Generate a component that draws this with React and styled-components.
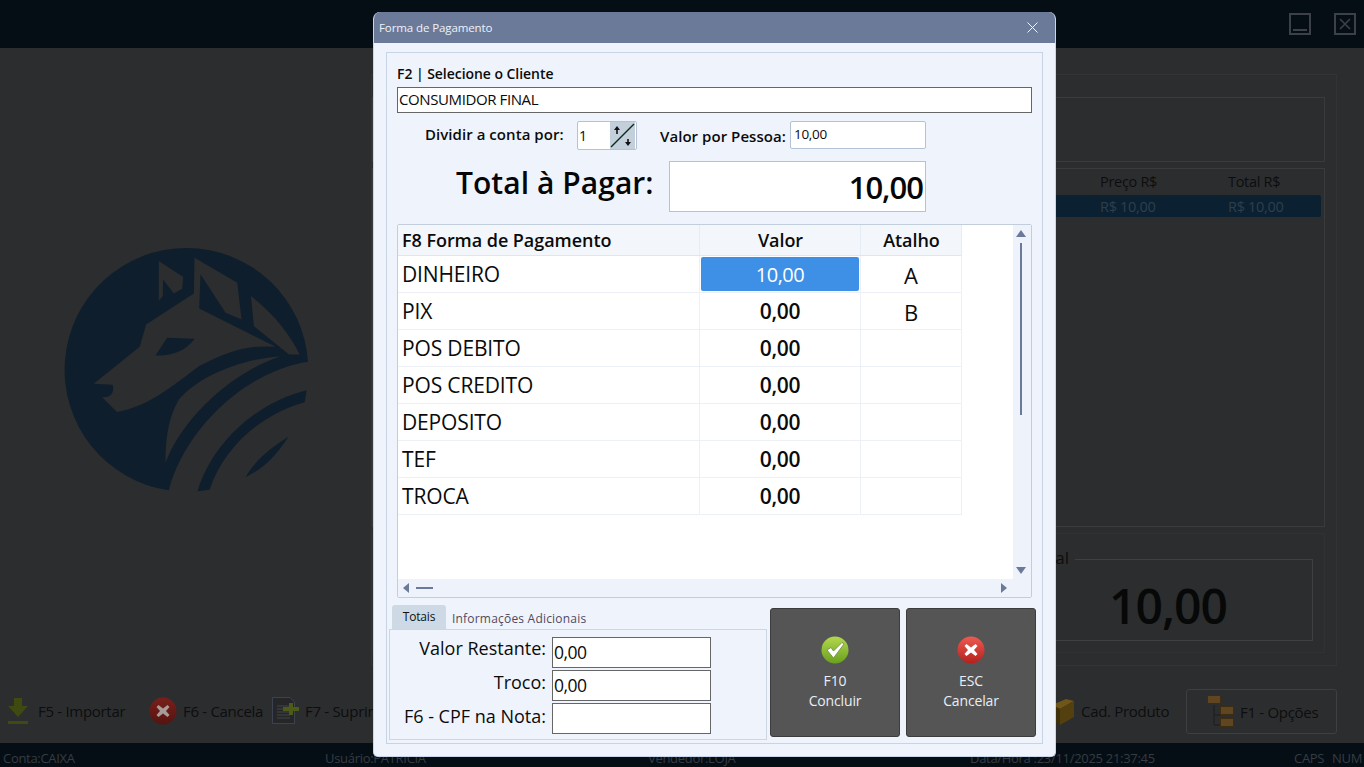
import React from 'react';
import styled, { createGlobalStyle } from 'styled-components';

const GlobalStyle = createGlobalStyle`
  html, body { margin: 0; padding: 0; background: #2c2d2e; overflow: hidden; }
  * { box-sizing: border-box; }
  body { font-family: "Open Sans", "Noto Sans", sans-serif; }
`

const Page = styled.div`
  position: relative;
  width: 1364px;
  height: 767px;
  display: grid;
  grid-template-rows: 48px 622px 73px 24px;
  background: #2c2d2e;
  overflow: hidden;
`

const TopBar = styled.div`
  background: #060e15;
  display: flex;
  justify-content: flex-end;
  align-items: flex-start;
  gap: 23px;
  padding: 13px 8px 0 0;
`

const WinButton = styled.div`
  width: 22px;
  height: 22px;
  border: 2px solid #3b4146;
  display: flex;
  align-items: center;
  justify-content: center;
`

const Main = styled.div`
  display: grid;
  grid-template-columns: 371px 966px;
`

const LogoSide = styled.div`
  padding: 198px 0 0 62px;
`

const SalePanel = styled.div`
  margin-top: 26px;
  height: 592px;
  border: 1px solid #323335;
  padding: 22px 11px 0 0;
  display: flex;
  flex-direction: column;
`

const TopGroup = styled.div`
  height: 65px;
  border: 1px solid #3a3b3d;
`

const ItemsGrid = styled.div`
  margin-top: 6px;
  height: 359px;
  border: 1px solid #3a3b3d;
  padding: 1px 3px;
  color: #0c0d0e;
  font-size: 14.5px;
  letter-spacing: -0.3px;
`

const ItemsRow = styled.div`
  display: grid;
  grid-template-columns: 630px 82px 128px 1fr;
  align-items: center;
  height: 25px;
  padding: 0 0 2px 12px;
`

const ItemsSelected = styled(ItemsRow)`
  height: 22px;
  padding-bottom: 0;
  background: #0b2132;
  border-radius: 2px;
  color: #2e3f4c;
`

const TotalGroup = styled.div`
  margin-top: 6px;
  height: 120px;
  border: 1px solid #303133;
  padding: 25px 11px 0 0;
`

const TotalFieldset = styled.div`
  position: relative;
  height: 82px;
  border: 1px solid #3f4042;
  color: #070808;
  font-size: 48px;
  font-weight: 600;
  letter-spacing: -1px;
  line-height: 92px;
  text-align: center;
  padding-left: 650px;
`

const TotalLegend = styled.span`
  position: absolute;
  top: -14px;
  right: 237px;
  padding: 0 6px;
  background: #2c2d2e;
  color: #0c0d0e;
  font-size: 17px;
  font-weight: 400;
  letter-spacing: 0;
  line-height: 24px;
`

const Toolbar = styled.div`
  display: flex;
  align-items: center;
  padding: 9px 27px 0 8px;
  color: #0d0e0f;
  font-size: 15px;
  letter-spacing: -0.3px;
`

const ToolItem = styled.div`
  width: ${p => p.$width}px;
  display: flex;
  align-items: center;
  gap: ${p => p.$gap || 6}px;
  white-space: nowrap;
  flex-shrink: 0;
  svg { flex-shrink: 0; }
`

const ToolSpacer = styled.div`
  flex: 1;
`

const OptionsButton = styled.div`
  width: 151px;
  height: 45px;
  margin-top: 1px;
  border: 1px solid #3e3f41;
  border-radius: 3px;
  display: flex;
  align-items: center;
  gap: 5px;
  padding-left: 20px;
`

const StatusBar = styled.div`
  background: #060e15;
  display: grid;
  grid-template-columns: 322px 323px 322px 324px 38px 1fr;
  align-items: center;
  padding: 6px 0 0 3px;
  color: #353c42;
  font-size: 13px;
  letter-spacing: -0.3px;
  white-space: nowrap;
`

const Modal = styled.div`
  position: absolute;
  left: 373px;
  top: 12px;
  width: 683px;
  height: 745px;
  background: #eff4fc;
  border-radius: 7px 7px 5px 5px;
  border: 1px solid #c9d5ea;
  border-top: none;
  display: flex;
  flex-direction: column;
  overflow: hidden;
`

const TitleBar = styled.div`
  height: 31px;
  flex-shrink: 0;
  background: #6b7a98;
  display: flex;
  align-items: center;
  justify-content: space-between;
  padding: 0 17px 0 5px;
  color: #eef2f8;
  font-size: 11.5px;
  letter-spacing: -0.1px;
`

const Inner = styled.div`
  margin: 9px 12px 0 12px;
  height: 692px;
  border: 1px solid #c8d4e3;
  padding: 12px 10px 0;
  display: flex;
  flex-direction: column;
`

const ClientLabel = styled.div`
  height: 22px;
  font-size: 14px;
  font-weight: 600;
  letter-spacing: -0.05px;
  line-height: 18px;
  color: #0b0b0b;
`

const ClientField = styled.div`
  height: 26px;
  background: #fff;
  border: 1px solid #666;
  padding-left: 1px;
  font-size: 15px;
  letter-spacing: -0.4px;
  line-height: 22px;
  color: #0a0a0a;
`

const SplitRow = styled.div`
  margin-top: 8px;
  height: 29px;
  display: flex;
  padding-left: 28px;
  color: #0b0b0b;
  font-size: 15px;
  font-weight: 600;
`

const SplitLabel = styled.div`
  width: ${p => p.$width}px;
  padding-left: ${p => p.$indent || 0}px;
  line-height: ${p => p.$line || 26}px;
  letter-spacing: 0.05px;
  white-space: nowrap;
`

const SpinBox = styled.div`
  width: 60px;
  height: 29px;
  background: #fff;
  border: 1px solid #b4c2d6;
  border-radius: 2px;
  display: flex;
  justify-content: space-between;
  padding-left: 1px;
  font-weight: 400;
  font-size: 14px;
  line-height: 27px;
`

const SpinButton = styled.div`
  width: 25px;
  height: 27px;
  background: #c3d0dc;
  margin-right: 1px;
`

const PersonField = styled.div`
  width: 136px;
  height: 28px;
  background: #fff;
  border: 1px solid #b4c2d6;
  border-radius: 2px;
  padding-left: 3px;
  font-size: 13.5px;
  font-weight: 400;
  letter-spacing: -0.3px;
  line-height: 24px;
`

const TotalRow = styled.div`
  margin-top: 11px;
  height: 51px;
  display: flex;
  padding-left: 59px;
  gap: 15px;
`

const TotalLabel = styled.div`
  width: 198px;
  font-size: 30px;
  font-weight: 600;
  letter-spacing: 0.05px;
  line-height: 44px;
  color: #060606;
  white-space: nowrap;
`

const TotalField = styled.div`
  width: 257px;
  background: #fff;
  border: 1px solid #b4c2d6;
  text-align: right;
  padding-right: 2px;
  font-size: 31px;
  font-weight: 600;
  letter-spacing: -1px;
  line-height: 50px;
  color: #060606;
`

const TableBox = styled.div`
  margin-top: 12px;
  height: 374px;
  border: 1px solid #c3cedd;
  border-radius: 2px;
  background: #fff;
  display: grid;
  grid-template-columns: 1fr 18px;
  grid-template-rows: 1fr 18px;
`

const TableArea = styled.div`
  display: grid;
  grid-template-columns: 302px 161px 101px;
  grid-auto-rows: 37px;
  grid-template-rows: 31px;
  color: #0b0b0b;
`

const HeadCell = styled.div`
  background: #f3f7fc;
  border-right: 1px solid #e6ecf4;
  border-bottom: 1px solid #dfe6ef;
  font-size: 18px;
  font-weight: 600;
  letter-spacing: -0.05px;
  line-height: 30px;
  text-align: ${p => (p.$center ? 'center' : 'left')};
  padding-left: ${p => (p.$center ? 1 : 4)}px;
  white-space: nowrap;
`

const NameCell = styled.div`
  border-right: 1px solid #edf1f7;
  border-bottom: 1px solid #edf1f7;
  padding-left: 4px;
  font-size: 21px;
  letter-spacing: -0.15px;
  line-height: 37px;
`

const ValueCell = styled.div`
  border-right: 1px solid #edf1f7;
  border-bottom: 1px solid #edf1f7;
  padding: 1px;
`

const ValueInner = styled.div`
  height: 34px;
  border-radius: 2px;
  background: ${p => (p.$selected ? '#3e8fe6' : 'transparent')};
  color: ${p => (p.$selected ? '#fff' : '#0b0b0b')};
  font-size: ${p => (p.$selected ? 20 : 21)}px;
  font-weight: ${p => (p.$selected ? 400 : 600)};
  letter-spacing: ${p => (p.$selected ? '-0.5px' : '-0.3px')};
  line-height: 35px;
  text-align: center;
`

const KeyCell = styled.div`
  border-right: 1px solid #edf1f7;
  border-bottom: 1px solid #edf1f7;
  font-size: 22px;
  line-height: 38px;
  text-align: center;
`

const VScroll = styled.div`
  background: #eef3fb;
  display: flex;
  flex-direction: column;
  align-items: center;
  padding: 5px 2px 0 0;
`

const VThumb = styled.div`
  width: 2px;
  height: 172px;
  margin-top: 6px;
  background: #6b7a98;
`

const ScrollSpacer = styled.div`
  flex: 1;
`

const HScroll = styled.div`
  background: #eef3fb;
  display: flex;
  align-items: center;
  padding: 0 6px 0 5px;
  gap: 7px;
`

const HThumb = styled.div`
  width: 17px;
  height: 2px;
  background: #6b7a98;
`

const Corner = styled.div`
  background: #eef3fb;
`

const ArrowUp = styled.div`
  width: 0;
  height: 0;
  border-left: 5px solid transparent;
  border-right: 5px solid transparent;
  border-bottom: 7px solid #6b7a98;
`

const ArrowDown = styled(ArrowUp)`
  border-bottom: none;
  border-top: 7px solid #6b7a98;
  margin-bottom: 5px;
`

const ArrowSide = styled.div`
  width: 0;
  height: 0;
  border-top: 5px solid transparent;
  border-bottom: 5px solid transparent;
  ${p => (p.$left ? 'border-right: 6px solid #6b7a98;' : 'border-left: 6px solid #6b7a98;')}
`

const BottomRow = styled.div`
  margin: 7px -4px 0 -8px;
  display: flex;
  gap: 3px;
`

const TabsColumn = styled.div`
  width: 378px;
`

const TabStrip = styled.div`
  height: 24px;
  display: flex;
  padding-left: 3px;
`

const Tab = styled.div`
  width: ${p => (p.$active ? '54px' : 'auto')};
  background: ${p => (p.$active ? '#cdd9e5' : 'transparent')};
  border-radius: 3px 3px 0 0;
  padding-left: ${p => (p.$active ? 0 : 6)}px;
  text-align: ${p => (p.$active ? 'center' : 'left')};
  color: ${p => (p.$active ? '#111' : '#4f4a5e')};
  font-size: 12px;
  letter-spacing: ${p => (p.$active ? '-0.2px' : '0.2px')};
  line-height: ${p => (p.$active ? 24 : 27)}px;
`

const TabPanel = styled.div`
  height: 111px;
  border: 1px solid #cdd6e3;
  padding-top: 7px;
  display: flex;
  flex-direction: column;
  gap: 2px;
`

const TotalsRow = styled.div`
  display: flex;
  gap: 6px;
`

const TotalsLabel = styled.div`
  width: 156px;
  padding-top: ${p => p.$drop || 0}px;
  text-align: right;
  color: #0b0b0b;
  font-size: 18px;
  letter-spacing: 0;
  line-height: 23px;
  white-space: nowrap;
`

const TotalsField = styled.div`
  width: 159px;
  height: 31px;
  background: #fff;
  border: 1px solid #666;
  padding-left: 1px;
  color: #0a0a0a;
  font-size: 17.5px;
  letter-spacing: -0.5px;
  line-height: 28px;
`

const ActionButton = styled.div`
  width: 130px;
  height: 129px;
  margin: 3px ${p => p.$gap || 0}px 0 0;
  background: #555;
  border: 1px solid #3c3c3c;
  border-radius: 3px;
  display: flex;
  flex-direction: column;
  align-items: center;
  padding-top: 27px;
  color: #e9eef6;
  font-size: 14px;
  letter-spacing: -0.15px;
  line-height: 20px;
`

const ActionIcon = styled.div`
  height: 34px;
  margin-bottom: 1px;
`

function WolfLogo() {
  const bg = '#2c2d2e'
  return (
    <svg width="247" height="247" viewBox="70 50 740 740">
      <path fill="#0f1e2c" d="M807 397A365 365 0 1 0 390 782C430 620 600 430 807 397Z" />
      <path fill={bg} d="M165 463L303 352L322 285L465 192L467 85L595 160L608 270L560 250L485 135L481 237L710 352C620 345 560 370 480 410C400 470 330 530 235 547L190 503C215 505 228 490 222 466Z" />
      <path fill="#0f1e2c" d="M385 325L468 328C440 365 400 380 350 378Z" />
      <path fill={bg} d="M360 95L433 143L430 178L405 192L373 150L372 200L360 215Z" />
      <path fill={bg} d="M636 200C700 250 750 310 782 375L750 375L645 290Z" />
      <path fill={bg} d="M725 380C600 390 480 440 420 510C385 570 380 640 380 700C420 590 550 440 725 380Z" />
      <path fill="#0f1e2c" d="M803 482L797 518C680 550 560 640 512 780L476 785C520 640 650 520 803 482Z" />
      <path fill="#0f1e2c" d="M748 622C710 680 670 720 620 742C650 690 700 650 748 622Z" />
    </svg>
  )
}

function RoundIcon({ size, kind, dim }) {
  const id = `${kind}${dim ? 'Dim' : ''}`
  const stops = kind === 'ok'
    ? ['#b4d84e', '#69a01e']
    : dim ? ['#7a1f1b', '#551410'] : ['#ee5a50', '#b4201c']
  return (
    <svg width={size} height={size} viewBox="0 0 28 28">
      <defs>
        <linearGradient id={id} x1="0" y1="0" x2="0" y2="1">
          <stop offset="0" stopColor={stops[0]} />
          <stop offset="1" stopColor={stops[1]} />
        </linearGradient>
      </defs>
      <circle cx="14" cy="14" r="13.5" fill={`url(#${id})`} />
      {kind === 'ok'
        ? <path d="M6 14L10 11.5L12.5 15L21 6.5L23 8L12.5 22Z" fill="#fff" stroke="#6c8a3a" strokeWidth="0.8" />
        : <path d="M9.5 8L14 11.5L18.5 8L20.5 10L17 14L20.5 18L18.5 20L14 16.5L9.5 20L7.5 18L11 14L7.5 10Z" fill={dim ? '#a89a98' : '#fff'} />}
    </svg>
  )
}

function ImportIcon() {
  return (
    <svg width="20" height="27" viewBox="0 0 20 27">
      <path d="M6 0H14V8H20L10 19L0 8H6Z" fill="#3f4a10" />
      <rect y="23" width="20" height="3" fill="#3f4a10" />
    </svg>
  )
}

function SupplyIcon() {
  return (
    <svg width="28" height="28" viewBox="0 0 28 28">
      <path d="M.5.5H18L22.5 5V26.5H.5Z" fill="#242628" stroke="#3c4350" />
      <path d="M5 9H18M5 12H18M5 15H18M5 18H18M5 21H18" stroke="#454545" />
      <path d="M17 6H21V10H27V14H21V18H17V14H11V10H17Z" fill="#4e5a18" />
    </svg>
  )
}

function BoxIcon() {
  return (
    <svg width="22" height="30" viewBox="0 0 22 30">
      <path d="M0 9L14 3L22 5L8 13Z" fill="#6f5518" />
      <path d="M0 9L8 13V29L0 24Z" fill="#3f300c" />
      <path d="M8 13L22 5V21L8 29Z" fill="#54400f" />
    </svg>
  )
}

function TreeIcon() {
  return (
    <svg width="28" height="33" viewBox="0 0 28 33">
      <path d="M7 10V30H14M7 20H14" stroke="#1c1c1c" fill="none" />
      <rect x=".5" y=".5" width="13" height="8" fill="#5f4620" stroke="#3c2c10" />
      <rect x="13.5" y="11.5" width="13" height="8" fill="#5f4620" stroke="#3c2c10" />
      <rect x="13.5" y="23.5" width="13" height="8" fill="#5f4620" stroke="#3c2c10" />
    </svg>
  )
}

const methods = [
  { name: 'DINHEIRO', value: '10,00', key: 'A', selected: true },
  { name: 'PIX', value: '0,00', key: 'B' },
  { name: 'POS DEBITO', value: '0,00' },
  { name: 'POS CREDITO', value: '0,00' },
  { name: 'DEPOSITO', value: '0,00' },
  { name: 'TEF', value: '0,00' },
  { name: 'TROCA', value: '0,00' },
]

function App() {
  return (
    <Page>
      <GlobalStyle />
      <TopBar>
        <WinButton>
          <svg width="18" height="18" viewBox="0 0 18 18"><rect x="2" y="14" width="14" height="2" fill="#3b4146" /></svg>
        </WinButton>
        <WinButton>
          <svg width="14" height="14" viewBox="0 0 14 14"><path d="M2 2L12 12M12 2L2 12" stroke="#3b4146" strokeWidth="1.6" /></svg>
        </WinButton>
      </TopBar>

      <Main>
        <LogoSide><WolfLogo /></LogoSide>
        <SalePanel>
          <TopGroup />
          <ItemsGrid>
            <ItemsRow>
              <span>Qtd.</span><span />
              <span>Preço R$</span><span>Total R$</span>
            </ItemsRow>
            <ItemsSelected>
              <span>1,000</span><span />
              <span>R$ 10,00</span><span>R$ 10,00</span>
            </ItemsSelected>
          </ItemsGrid>
          <TotalGroup>
            <TotalFieldset>
              <TotalLegend>Total</TotalLegend>
              10,00
            </TotalFieldset>
          </TotalGroup>
        </SalePanel>
      </Main>

      <Toolbar>
        <ToolItem $width={141} $gap={10}><ImportIcon />F5 - Importar</ToolItem>
        <ToolItem $width={123}><RoundIcon size={28} kind="no" dim />F6 - Cancela</ToolItem>
        <ToolItem $width={110} $gap={5}><SupplyIcon />F7 - Suprimento</ToolItem>
        <ToolSpacer />
        <ToolItem $width={134} $gap={7}><BoxIcon />Cad. Produto</ToolItem>
        <OptionsButton><TreeIcon />F1 - Opções</OptionsButton>
      </Toolbar>

      <StatusBar>
        <span>Conta:CAIXA</span>
        <span>Usuário:PATRÍCIA</span>
        <span>Vendedor:LOJA</span>
        <span>Data/Hora :23/11/2025 21:37:45</span>
        <span>CAPS</span>
        <span>NUM</span>
      </StatusBar>

      <Modal>
        <TitleBar>
          Forma de Pagamento
          <svg width="11" height="11" viewBox="0 0 11 11"><path d="M.5.5L10.5 10.5M10.5.5L.5 10.5" stroke="#f2f5fa" /></svg>
        </TitleBar>
        <Inner>
          <ClientLabel>F2 | Selecione o Cliente</ClientLabel>
          <ClientField>CONSUMIDOR FINAL</ClientField>

          <SplitRow>
            <SplitLabel $width={152}>Dividir a conta por:</SplitLabel>
            <SpinBox>
              1
              <SpinButton>
                <svg width="25" height="27" viewBox="0 0 25 27">
                  <path d="M1 25L24 2" stroke="#0f2a20" strokeWidth="1.4" />
                  <path d="M7 7V12M18 17V22" stroke="#111" strokeWidth="1.6" />
                  <path d="M4 8L7 4L10 8ZM15 20L18 24L21 20Z" fill="#111" />
                </svg>
              </SpinButton>
            </SpinBox>
            <SplitLabel $width={153} $line={30} $indent={23}>Valor por Pessoa:</SplitLabel>
            <PersonField>10,00</PersonField>
          </SplitRow>

          <TotalRow>
            <TotalLabel>Total à Pagar:</TotalLabel>
            <TotalField>10,00</TotalField>
          </TotalRow>

          <TableBox>
            <TableArea>
              <HeadCell>F8 Forma de Pagamento</HeadCell>
              <HeadCell $center>Valor</HeadCell>
              <HeadCell $center>Atalho</HeadCell>
              {methods.map(m => (
                <React.Fragment key={m.name}>
                  <NameCell>{m.name}</NameCell>
                  <ValueCell><ValueInner $selected={m.selected}>{m.value}</ValueInner></ValueCell>
                  <KeyCell>{m.key}</KeyCell>
                </React.Fragment>
              ))}
            </TableArea>
            <VScroll>
              <ArrowUp />
              <VThumb />
              <ScrollSpacer />
              <ArrowDown />
            </VScroll>
            <HScroll>
              <ArrowSide $left />
              <HThumb />
              <ScrollSpacer />
              <ArrowSide />
            </HScroll>
            <Corner />
          </TableBox>

          <BottomRow>
            <TabsColumn>
              <TabStrip>
                <Tab $active>Totais</Tab>
                <Tab>Informações Adicionais</Tab>
              </TabStrip>
              <TabPanel>
                <TotalsRow>
                  <TotalsLabel>Valor Restante:</TotalsLabel>
                  <TotalsField>0,00</TotalsField>
                </TotalsRow>
                <TotalsRow>
                  <TotalsLabel $drop={1}>Troco:</TotalsLabel>
                  <TotalsField>0,00</TotalsField>
                </TotalsRow>
                <TotalsRow>
                  <TotalsLabel $drop={2}>F6 - CPF na Nota:</TotalsLabel>
                  <TotalsField />
                </TotalsRow>
              </TabPanel>
            </TabsColumn>
            <ActionButton $gap={3}>
              <ActionIcon><RoundIcon size={28} kind="ok" /></ActionIcon>
              <span>F10</span>
              <span>Concluir</span>
            </ActionButton>
            <ActionButton>
              <ActionIcon><RoundIcon size={28} kind="no" /></ActionIcon>
              <span>ESC</span>
              <span>Cancelar</span>
            </ActionButton>
          </BottomRow>
        </Inner>
      </Modal>
    </Page>
  )
}

export default App
